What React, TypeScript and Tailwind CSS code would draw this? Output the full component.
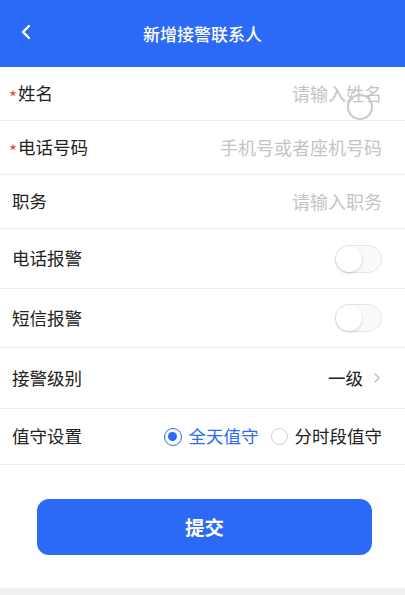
import { ChevronLeft, ChevronRight } from 'lucide-react'

const font = { fontFamily: '"Noto Sans CJK SC", "Noto Sans", sans-serif' }

const TextRow = ({ label, placeholder, required }: { label: string; placeholder: string; required?: boolean }) => (
	<div className="flex h-[54px] items-center justify-between border-b border-[#ececec] pl-[9px] pr-[23px]">
		<div className="flex items-center text-[17.5px] text-[#222]">
			{required ? <span className="mr-[1px] translate-y-[3px] text-[17px] text-[#e5484d]">*</span> : <span className="w-[3px]" />}
			{label}
		</div>
		<div className="text-[18px] text-[#c4c4c4]">{placeholder}</div>
	</div>
)

const Toggle = () => (
	<div className="flex h-[28px] w-[47px] items-center rounded-full border border-[#e6e6e6] bg-[#fafafa]">
		<div className="h-[26px] w-[26px] rounded-full bg-white shadow-[0_1px_3px_rgba(0,0,0,0.18)]" />
	</div>
)

const SwitchRow = ({ label, h }: { label: string; h: string }) => (
	<div className={`flex ${h} items-center justify-between border-b border-[#ececec] pl-[12px] pr-[23px]`}>
		<div className="text-[17.5px] text-[#222]">{label}</div>
		<Toggle />
	</div>
)

export default function App() {
	return (
		<div className="relative flex h-[595px] w-[405px] flex-col bg-white" style={font}>
			<div className="relative flex h-[67px] items-center justify-center bg-[#2b6af6]">
				<ChevronLeft size={24} strokeWidth={2.4} className="absolute left-[14px] top-[20px] text-white" />
				<div className="text-[17px] font-medium text-white">新增接警联系人</div>
			</div>

			<div className="relative">
				<TextRow label="姓名" placeholder="请输入姓名" required />
				{/* touch indicator */}
				<div className="absolute left-[347px] top-[27px] h-[26px] w-[26px] rounded-full border-2 border-[#c9c9c9]" />
			</div>
			<TextRow label="电话号码" placeholder="手机号或者座机号码" required />
			<TextRow label="职务" placeholder="请输入职务" />
			<SwitchRow label="电话报警" h="h-[60px]" />
			<SwitchRow label="短信报警" h="h-[59px]" />

			<div className="flex h-[61px] items-center justify-between border-b border-[#ececec] pl-[12px] pr-[20px]">
				<div className="text-[17.5px] text-[#222]">接警级别</div>
				<div className="flex items-center gap-[6px] text-[17.5px] text-[#222]">
					一级
					<ChevronRight size={16} className="text-[#bdbdbd]" />
				</div>
			</div>

			<div className="flex h-[56px] items-center justify-between border-b border-[#ececec] pl-[12px] pr-[23px]">
				<div className="text-[17.5px] text-[#222]">值守设置</div>
				<div className="flex items-center text-[17.5px]">
					<div className="flex h-[18px] w-[18px] items-center justify-center rounded-full border-[1.5px] border-[#2b6af6]">
						<div className="h-[9px] w-[9px] rounded-full bg-[#2b6af6]" />
					</div>
					<span className="ml-[7px] text-[#2b6af6]">全天值守</span>
					<div className="ml-[12px] h-[17px] w-[17px] rounded-full border border-[#cfcfcf]" />
					<span className="ml-[7px] text-[#222]">分时段值守</span>
				</div>
			</div>

			<div className="flex flex-1 items-start pl-[37px] pt-[34px]">
				<button className="h-[56px] w-[335px] rounded-[12px] bg-[#2c69f6] text-[19.5px] font-bold text-white">提交</button>
			</div>
			<div className="h-[7px] bg-[#f1f1f1]" />
		</div>
	)
}
